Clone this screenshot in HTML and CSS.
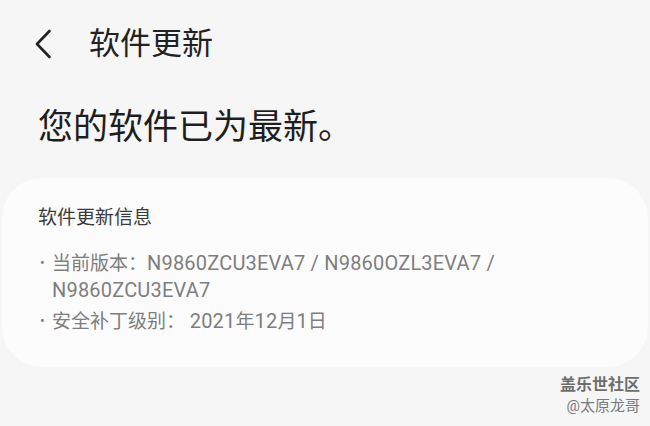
FILE: index.html
```html
<!DOCTYPE html>
<html lang="zh-CN">
<head>
    <meta charset="UTF-8">
    <title>软件更新</title>
    <link rel="stylesheet" href="styles.css">
</head>
<body>
    <div class="header">
        <a href="javascript:;" class="back">
            <svg width="18" height="30" viewBox="0 0 18 30"><path d="M15.5 2 L3 15 L15.5 28" fill="none" stroke="#222" stroke-width="2.6" stroke-linecap="round" stroke-linejoin="round"/></svg>
        </a>
        <span class="title">软件更新</span>
    </div>
    <h1 class="status">您的软件已为最新。</h1>
    <div class="card">
        <div class="card-title">软件更新信息</div>
        <ul class="info">
            <li><span class="dot">•</span><p>当前版本：<span class="code">N9860ZCU3EVA7 / N9860OZL3EVA7 /</span> <span class="code">N9860ZCU3EVA7</span></p></li>
            <li><span class="dot">•</span><p>安全补丁级别： <span class="code">2021</span>年<span class="code">12</span>月<span class="code">1</span>日</p></li>
        </ul>
    </div>
    <div class="mark">
        <div class="mark-top">盖乐世社区</div>
        <div class="mark-sub">@太原龙哥</div>
    </div>
</body>
</html>
```

FILE: styles.css
```css
*{
    margin:0; padding:0; text-decoration:none;
}
body {
    width: 650px; height: 426px; overflow: hidden; position: relative;
    background: #f6f6f6; color: #1e1e1e;
    font-family: Roboto, "Noto Sans CJK SC", sans-serif;
}
.header {
    display: flex; align-items: center; height: 88px; padding-left: 34px;
}
.back { display: flex; width: 18px; height: 30px;}
.title {
    margin-left: 37px; font-size: 31px; line-height: 40px; color: #222;
}
.status {
    margin: 20px 0 30px 38px; font-size: 35px; line-height: 40px; font-weight: normal; color: #1e1e1e;
}
.card {
    margin: 0 2px; background: #fcfcfc; border-radius: 40px; padding: 27px 36px 32px 36px;
}
.card-title {
    font-size: 19px; line-height: 26px; color: #3a3a3a;
}
.info {
    list-style: none; margin: 19px 0 0 2px; font-size: 19px; line-height: 26px; color: #7e7e7e;
}
.info li { display: flex; margin-bottom: 4px;}
.info li:last-child { margin-bottom: 0;}
.dot { width: 12px; flex-shrink: 0; font-size: 14px;}
.code { font-size: 20px; letter-spacing: 0.2px;}
.mark {
    position: absolute; right: 10px; top: 374px; text-align: right; color: #707070;
}
.mark-top { font-size: 16px; line-height: 22px; font-weight: bold; color: #6e6e6e;}
.mark-sub { font-size: 15px; line-height: 20px; color: #7a7a7a;}
```
